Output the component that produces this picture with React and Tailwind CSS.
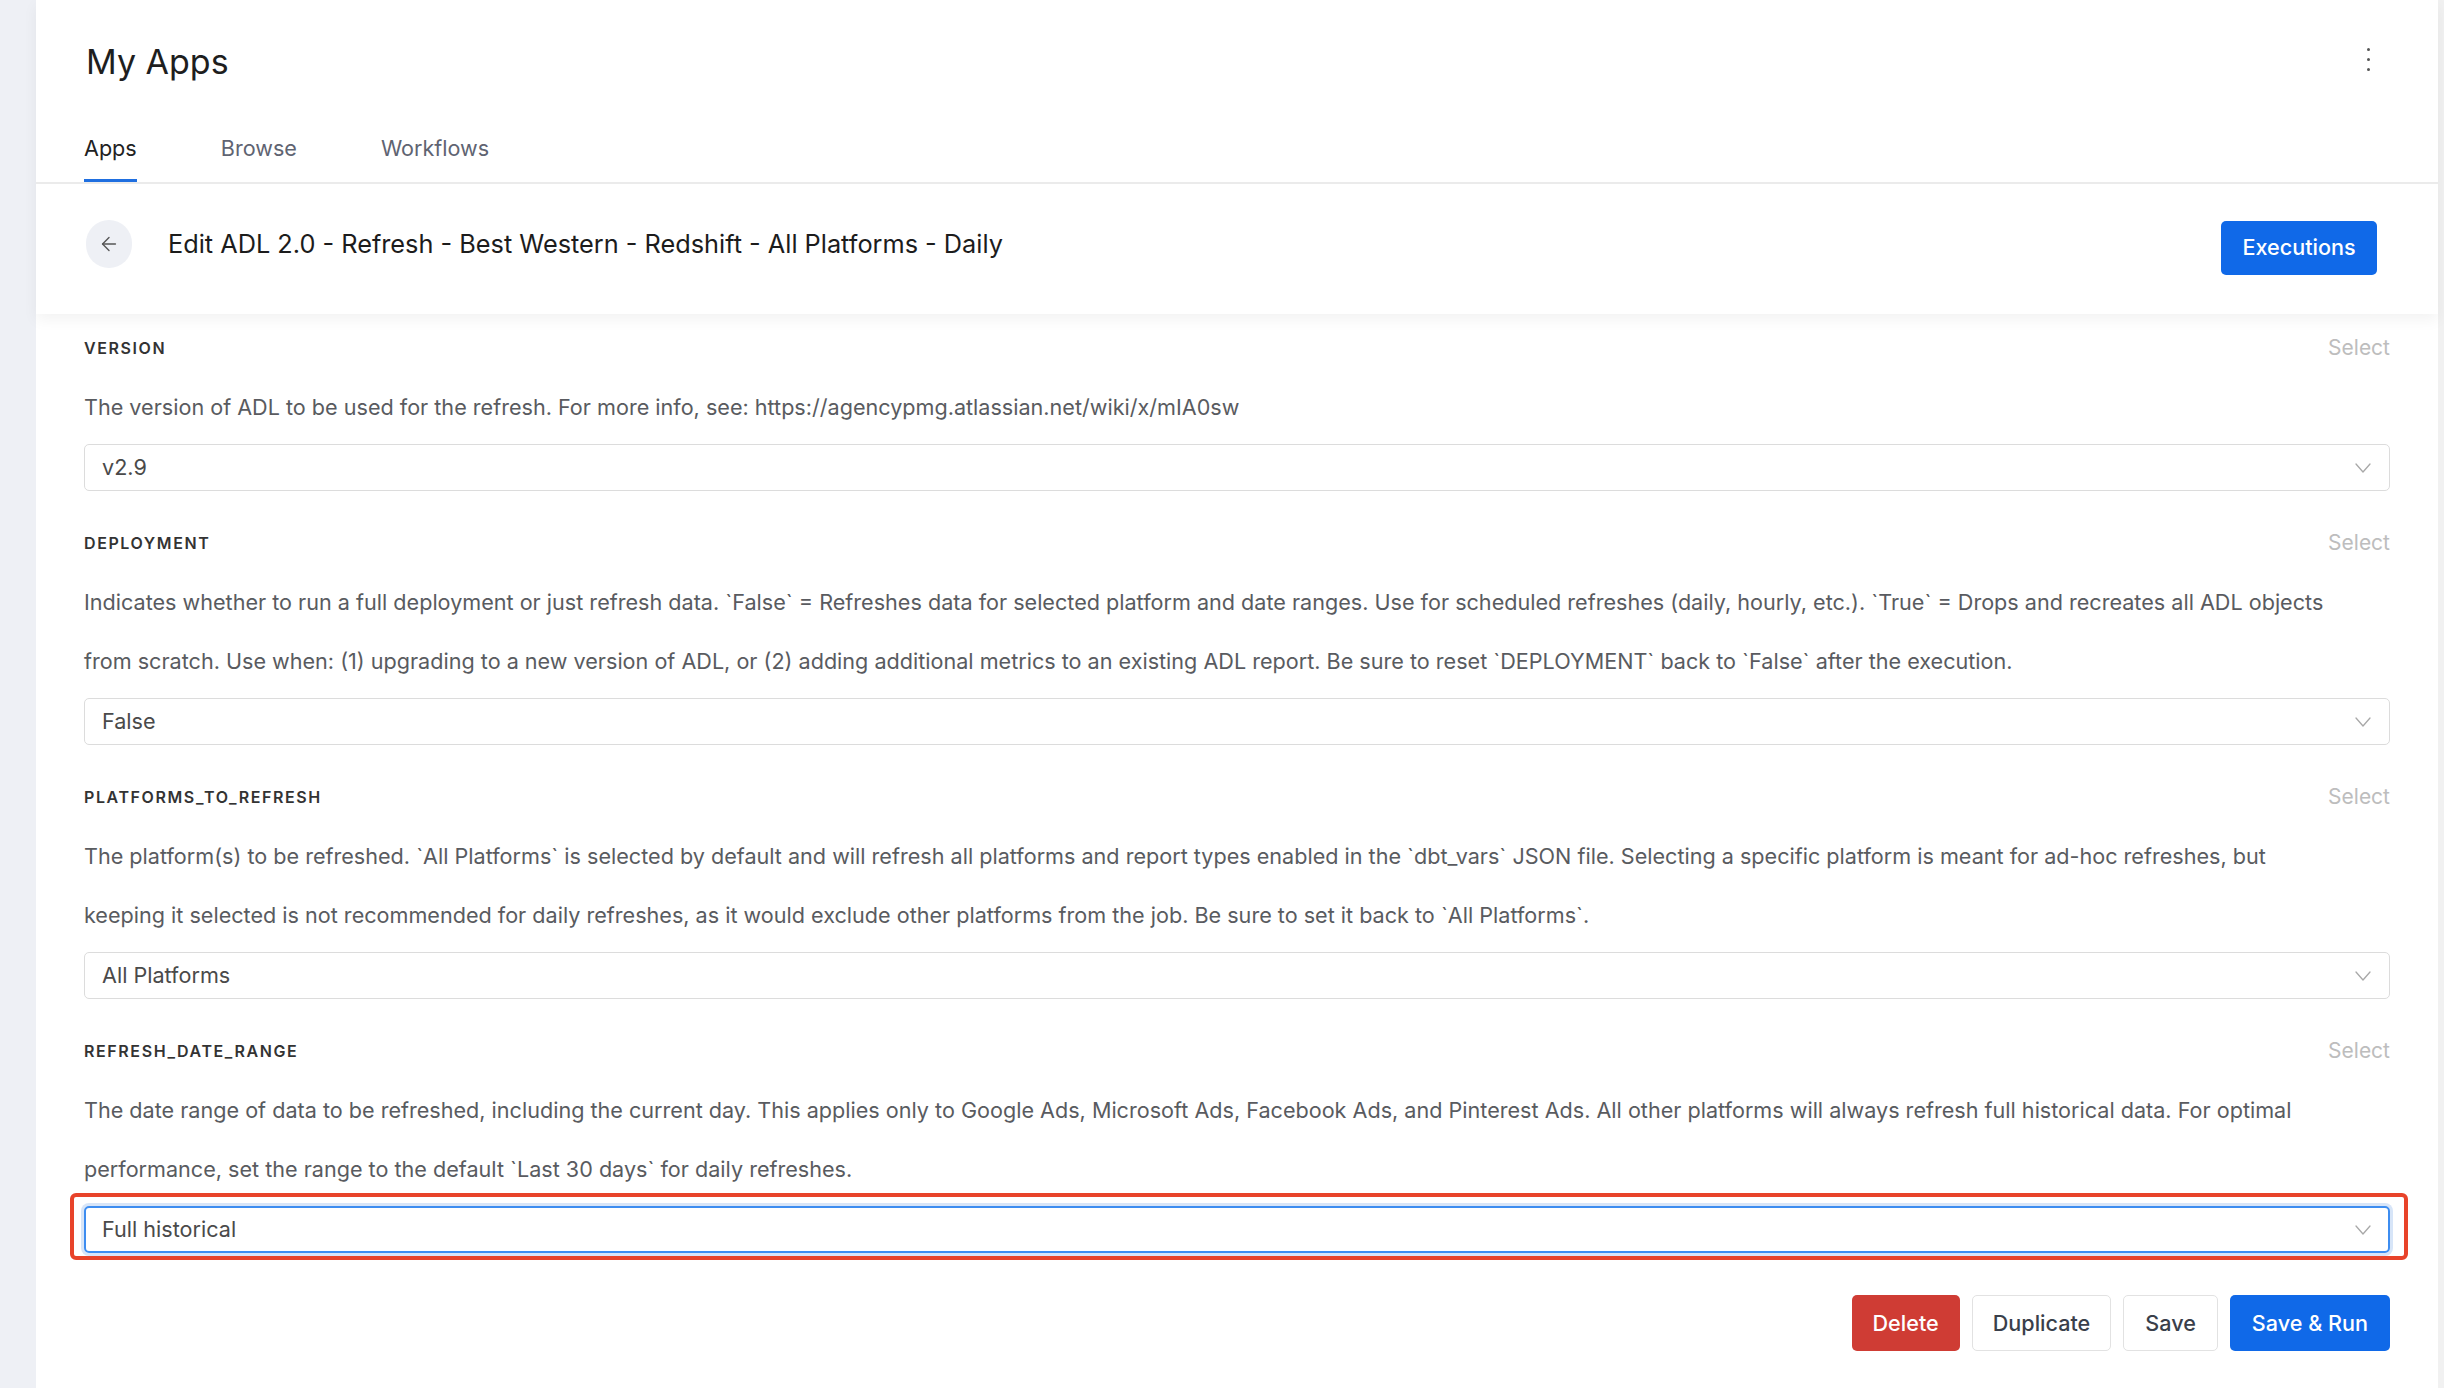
import { ArrowLeft } from "lucide-react";

const fields = [
  {
    label: "VERSION",
    lines: [
      "The version of ADL to be used for the refresh. For more info, see: https://agencypmg.atlassian.net/wiki/x/mIA0sw",
    ],
    value: "v2.9",
  },
  {
    label: "DEPLOYMENT",
    lines: [
      "Indicates whether to run a full deployment or just refresh data. `False` = Refreshes data for selected platform and date ranges. Use for scheduled refreshes (daily, hourly, etc.). `True` = Drops and recreates all ADL objects",
      "from scratch. Use when: (1) upgrading to a new version of ADL, or (2) adding additional metrics to an existing ADL report. Be sure to reset `DEPLOYMENT` back to `False` after the execution.",
    ],
    value: "False",
  },
  {
    label: "PLATFORMS_TO_REFRESH",
    lines: [
      "The platform(s) to be refreshed. `All Platforms` is selected by default and will refresh all platforms and report types enabled in the `dbt_vars` JSON file. Selecting a specific platform is meant for ad-hoc refreshes, but",
      "keeping it selected is not recommended for daily refreshes, as it would exclude other platforms from the job. Be sure to set it back to `All Platforms`.",
    ],
    value: "All Platforms",
  },
  {
    label: "REFRESH_DATE_RANGE",
    lines: [
      "The date range of data to be refreshed, including the current day. This applies only to Google Ads, Microsoft Ads, Facebook Ads, and Pinterest Ads. All other platforms will always refresh full historical data. For optimal",
      "performance, set the range to the default `Last 30 days` for daily refreshes.",
    ],
    value: "Full historical",
    focused: true,
  },
];

function Chevron() {
  return (
    <svg width="16" height="10" viewBox="0 0 16 10" fill="none">
      <path d="M1 1l7 8 7-8" stroke="#a8a8a8" strokeWidth="1.3" strokeLinecap="round" strokeLinejoin="round" />
    </svg>
  );
}

function SelectBox({ value, focused }) {
  return (
    <div
      className={
        focused
          ? "flex h-[47px] items-center justify-between rounded-[5px] border-2 border-[#3d8df0] pl-[16px] pr-[17px] shadow-[0_0_0_3px_#d7e5f8]"
          : "flex h-[47px] items-center justify-between rounded-[5px] border border-[#dcdcdc] pl-[17px] pr-[18px]"
      }
    >
      <span className="text-[21.6px] text-[#4a4a4a]">{value}</span>
      <Chevron />
    </div>
  );
}

function Field({ field, last }) {
  return (
    <div className={last ? "" : "mb-[40px]"}>
      <div className="flex h-[24px] items-center justify-between">
        <span className="text-[16px] font-semibold tracking-[0.1em] text-[#333]">{field.label}</span>
        <span className="text-[21px] text-[#bdbdbd]">Select</span>
      </div>
      <p className="mt-[18px] text-[21.6px] leading-[59px] text-[#595b60]">
        {field.lines.map((l, i) => (
          <span key={i}>
            {l}
            {i < field.lines.length - 1 && <br />}
          </span>
        ))}
      </p>
      <div className="relative mt-[7px]">
        <SelectBox value={field.value} focused={field.focused} />
        {field.focused && (
          <div className="pointer-events-none absolute -top-[13px] -bottom-[7px] -left-[14px] -right-[18px] rounded-[6px] border-[4px] border-[#e8432a]" />
        )}
      </div>
    </div>
  );
}

export default function App() {
  return (
    <div className="flex min-h-[1388px] bg-white font-['Inter',sans-serif]">
      <div className="w-[36px] shrink-0 bg-[#eef0f5]" />
      <div className="flex-1">
        <div className="relative z-10 bg-white shadow-[0_6px_14px_rgba(0,0,0,0.05)]">
          <div className="border-b-2 border-[#ebebeb]">
            <div className="flex items-start justify-between pl-[50px] pr-[68px] pt-[42px]">
              <h1 className="text-[34px] leading-[40px] text-[#1e1e1e]">My Apps</h1>
              <div className="mt-[6px] flex flex-col items-center gap-[7px]">
                <span className="h-[3px] w-[3px] rounded-full bg-[#555]" />
                <span className="h-[3px] w-[3px] rounded-full bg-[#555]" />
                <span className="h-[3px] w-[3px] rounded-full bg-[#555]" />
              </div>
            </div>
            <div className="mt-[52px] flex gap-[84px] pl-[48px]">
              <div className="border-b-[3px] border-[#1f6fe0] pb-[17px] text-[21.6px] leading-[28px] text-[#222]">Apps</div>
              <div className="pb-[20px] text-[21.6px] leading-[28px] text-[#5f6472]">Browse</div>
              <div className="pb-[20px] text-[21.6px] leading-[28px] text-[#5f6472]">Workflows</div>
            </div>
          </div>
          <div className="flex h-[130px] items-center justify-between pl-[50px] pr-[61px]">
            <div className="flex items-center gap-[36px] pb-[10px]">
              <button className="flex h-[48px] w-[46px] items-center justify-center rounded-full bg-[#eef0f5] text-[#555]">
                <ArrowLeft size={22} strokeWidth={1.5} />
              </button>
              <h2 className="text-[25.3px] text-[#1c1c1c]">
                Edit ADL 2.0 - Refresh - Best Western - Redshift - All Platforms - Daily
              </h2>
            </div>
            <button className="mb-[3px] h-[54px] w-[156px] rounded-[5px] bg-[#1069e8] text-[21.6px] font-medium text-white">
              Executions
            </button>
          </div>
        </div>

        <div className="px-[48px] pt-[22px]">
          {fields.map((f, i) => (
            <Field key={f.label} field={f} last={i === fields.length - 1} />
          ))}
          <div className="mt-[42px] flex justify-end gap-[12px]">
            <button className="h-[56px] rounded-[5px] bg-[#cf3c34] px-[21px] text-[21.6px] font-medium text-white">Delete</button>
            <button className="h-[56px] rounded-[5px] border border-[#e2e2e2] bg-white px-[20px] text-[21.6px] font-medium text-[#3a3f4b]">
              Duplicate
            </button>
            <button className="h-[56px] rounded-[5px] border border-[#e2e2e2] bg-white px-[21px] text-[21.6px] font-medium text-[#3a3f4b]">
              Save
            </button>
            <button className="h-[56px] rounded-[5px] bg-[#1069e8] px-[22px] text-[21.6px] font-medium text-white">Save &amp; Run</button>
          </div>
        </div>
      </div>
      <div className="w-[6px] shrink-0 bg-[#f1f1f1]" />
    </div>
  );
}
